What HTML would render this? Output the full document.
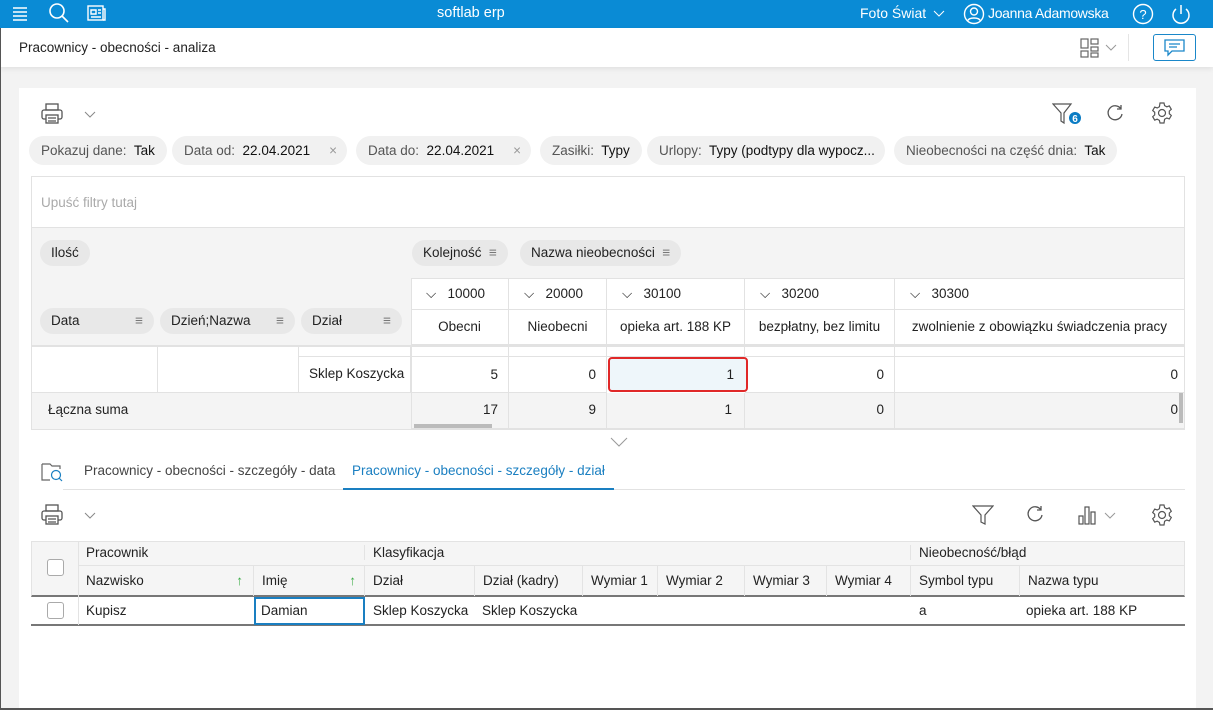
<!DOCTYPE html><html><head><meta charset="utf-8"><style>
*{box-sizing:border-box;margin:0;padding:0}
body{width:1213px;height:710px;overflow:hidden;background:#f3f3f3;font-family:"Liberation Sans",sans-serif;font-size:13px;color:#222;position:relative}
.a{position:absolute}
.top{left:0;top:0;width:1213px;height:28px;background:#0a8bd5;color:#fff}
.chip{position:absolute;top:136px;height:29px;background:#f1f1f1;border-radius:15px;line-height:29px;padding:0 12px;font-size:13.5px;color:#555;white-space:nowrap}
.chip b{color:#111;font-weight:normal}
.fchip{position:absolute;height:26px;background:#e8e8e8;border-radius:13px;line-height:26px;padding:0 11px;font-size:13.5px;color:#222}
.c{position:absolute;border-right:1px solid #e2e2e2;border-bottom:1px solid #e2e2e2;font-size:13.5px;white-space:nowrap;overflow:hidden}
.g{position:absolute;font-size:13.5px;white-space:nowrap;border-right:1px solid #e3e3e3;padding-left:8px}
</style></head><body>
<div class="a top">
 <svg class="a" style="left:12px;top:5px" width="16" height="16"><path d="M1 3h14M1 7h14M1 11h14M1 15h14" stroke="#fff" stroke-width="1.6"/></svg>
 <svg class="a" style="left:48px;top:2px" width="22" height="22" fill="none" stroke="#fff" stroke-width="1.6"><circle cx="9" cy="9" r="7"/><path d="M14 14l6 6"/></svg>
 <svg class="a" style="left:87px;top:5px" width="20" height="16" fill="none" stroke="#fff" stroke-width="1.4"><rect x="1" y="1" width="15" height="14"/><path d="M16 4h2v11h-2M4 5h5v4H4zM11 5h3M11 8h3M4 12h10"/></svg>
 <div class="a" style="left:437px;top:5px;font-size:14.5px">softlab erp</div>
 <div class="a" style="left:860px;top:5px;font-size:14px">Foto Świat</div>
 <svg class="a" style="left:933px;top:10px" width="12" height="8" fill="none" stroke="#fff"><path d="M1 1l5 5 5-5"/></svg>
 <svg class="a" style="left:963px;top:3px" width="22" height="22" fill="none" stroke="#fff" stroke-width="1.4"><circle cx="11" cy="11" r="9.5"/><circle cx="11" cy="8.5" r="3.5"/><path d="M4.5 18c1.5-4 11.5-4 13 0"/></svg>
 <div class="a" style="left:988px;top:5px;font-size:14px;letter-spacing:-0.3px">Joanna Adamowska</div>
 <svg class="a" style="left:1132px;top:3px" width="22" height="22" fill="none" stroke="#fff" stroke-width="1.4"><circle cx="11" cy="11" r="9.5"/><text x="11" y="16" fill="#fff" stroke="none" font-size="13" text-anchor="middle" font-family="Liberation Sans">?</text></svg>
 <svg class="a" style="left:1170px;top:3px" width="22" height="22" fill="none" stroke="#fff" stroke-width="1.5"><path d="M6 6a8 8 0 1 0 10 0M11 2v9"/></svg>
</div>
<div class="a" style="left:0;top:28px;width:1213px;height:39px;background:#fff;box-shadow:0 2px 5px rgba(0,0,0,.08)">
 <div class="a" style="left:19px;top:12px;font-size:13.5px">Pracownicy - obecności - analiza</div>
 <svg class="a" style="left:1080px;top:10px" width="20" height="20" fill="none" stroke="#666" stroke-width="1.2"><rect x="1" y="1" width="7" height="9"/><rect x="11" y="1" width="7" height="5"/><rect x="1" y="13" width="7" height="6"/><rect x="11" y="9" width="7" height="4"/><rect x="11" y="15" width="7" height="4"/></svg>
 <svg class="a" style="left:1105px;top:16px" width="12" height="7" fill="none" stroke="#999"><path d="M1 1l5 5 5-5"/></svg>
 <div class="a" style="left:1128px;top:6px;width:1px;height:27px;background:#e5e5e5"></div>
 <div class="a" style="left:1153px;top:6px;width:43px;height:27px;border:1px solid #1a87c9;border-radius:3px"></div>
 <svg class="a" style="left:1164px;top:11px" width="22" height="18" fill="none" stroke="#1a87c9" stroke-width="1.3"><path d="M1 1h19v11H8l-4 4v-4H1z"/><path d="M5 5h11M5 8h8"/></svg>
</div>
<div class="a" style="left:0;top:28px;width:1px;height:682px;background:#555"></div>
<div class="a" style="left:19px;top:88px;width:1177px;height:622px;background:#fff"></div>
<svg class="a" style="left:40px;top:102px" width="24" height="24" fill="none" stroke="#555" stroke-width="1.3"><rect x="6" y="2" width="12" height="6"/><rect x="2" y="8" width="20" height="9" rx="2"/><rect x="6" y="13" width="12" height="8" fill="#fff"/><path d="M8 16h8M8 19h8"/></svg>
<svg class="a" style="left:84px;top:111px" width="12" height="7" fill="none" stroke="#888"><path d="M1 1l5 5 5-5"/></svg>
<svg class="a" style="left:1052px;top:102px" width="30" height="24" fill="none" stroke="#555" stroke-width="1.2"><path d="M1 2h18l-7 9v10l-3-2v-8z"/><circle cx="23" cy="16" r="6" fill="#0a7cc4" stroke="none"/><text x="23" y="20" fill="#fff" stroke="none" font-size="10" font-weight="bold" text-anchor="middle" font-family="Liberation Sans">6</text></svg>
<svg class="a" style="left:1106px;top:104px" width="18" height="18" fill="none" stroke="#555" stroke-width="1.3"><path d="M15 5A7 7 0 1 0 16 10M15 1v4h-4"/></svg>
<svg class="a" style="left:1150px;top:101px" width="24" height="24" fill="none" stroke="#555" stroke-width="1.2"><circle cx="12" cy="12" r="3.5"/><path d="M10 2h4l.6 2.6 2.2 1.2 2.5-.9 2 3.4-2 1.8v2.6l2 1.8-2 3.4-2.5-.9-2.2 1.2L14 22h-4l-.6-2.6-2.2-1.2-2.5.9-2-3.4 2-1.8v-2.6l-2-1.8 2-3.4 2.5.9 2.2-1.2z"/></svg>
<div class="chip" style="left:29px">Pokazuj dane:&nbsp; <b>Tak</b></div>
<div class="chip" style="left:172px;width:175px">Data od:&nbsp; <b>22.04.2021</b><span class="a" style="right:10px;color:#999">×</span></div>
<div class="chip" style="left:356px;width:175px">Data do:&nbsp; <b>22.04.2021</b><span class="a" style="right:10px;color:#999">×</span></div>
<div class="chip" style="left:540px">Zasiłki:&nbsp; <b>Typy</b></div>
<div class="chip" style="left:647px;width:238px">Urlopy:&nbsp; <b>Typy (podtypy dla wypocz...</b></div>
<div class="chip" style="left:894px">Nieobecności na część dnia:&nbsp; <b>Tak</b></div>
<div class="a" style="left:31px;top:176px;width:1154px;height:254px;border:1px solid #e2e2e2;background:#f4f4f4"></div>
<div class="a" style="left:32px;top:177px;width:1152px;height:51px;background:#fff;border-bottom:1px solid #e2e2e2"></div>
<div class="a" style="left:41px;top:195px;color:#aaa;font-size:13.5px">Upuść filtry tutaj</div>
<div class="fchip" style="left:40px;top:240px">Ilość</div>
<div class="fchip" style="left:412px;top:240px">Kolejność &nbsp;<span style="color:#777">≡</span></div>
<div class="fchip" style="left:520px;top:240px">Nazwa nieobecności &nbsp;<span style="color:#777">≡</span></div>
<div class="fchip" style="left:40px;top:308px;width:114px">Data<span class="a" style="right:11px;color:#777">≡</span></div>
<div class="fchip" style="left:160px;top:308px;width:135px">Dzień;Nazwa<span class="a" style="right:11px;color:#777">≡</span></div>
<div class="fchip" style="left:301px;top:308px;width:101px">Dział<span class="a" style="right:11px;color:#777">≡</span></div>
<div class="a" style="left:411px;top:278px;width:774px;height:67px;background:#fff;border-top:1px solid #e2e2e2;border-left:1px solid #e2e2e2"></div>
<div class="c" style="left:411px;top:278px;width:98px;height:32px;line-height:31px;padding-left:15px">⌵ &nbsp;&nbsp;10000</div>
<div class="c" style="left:509px;top:278px;width:98px;height:32px;line-height:31px;padding-left:15px">⌵ &nbsp;&nbsp;20000</div>
<div class="c" style="left:607px;top:278px;width:138px;height:32px;line-height:31px;padding-left:15px">⌵ &nbsp;&nbsp;30100</div>
<div class="c" style="left:745px;top:278px;width:150px;height:32px;line-height:31px;padding-left:15px">⌵ &nbsp;&nbsp;30200</div>
<div class="c" style="left:895px;top:278px;width:290px;height:32px;line-height:31px;padding-left:15px">⌵ &nbsp;&nbsp;30300</div>
<div class="c" style="left:411px;top:310px;width:98px;height:35px;line-height:34px;text-align:center">Obecni</div>
<div class="c" style="left:509px;top:310px;width:98px;height:35px;line-height:34px;text-align:center">Nieobecni</div>
<div class="c" style="left:607px;top:310px;width:138px;height:35px;line-height:34px;text-align:center">opieka art. 188 KP</div>
<div class="c" style="left:745px;top:310px;width:150px;height:35px;line-height:34px;text-align:center">bezpłatny, bez limitu</div>
<div class="c" style="left:895px;top:310px;width:290px;height:35px;line-height:34px;text-align:center">zwolnienie z obowiązku świadczenia pracy</div>
<div class="a" style="left:32px;top:345px;width:1153px;height:48px;background:#fff;border-top:2px solid #e2e2e2"></div>
<div class="c" style="left:32px;top:347px;width:126px;height:46px"></div>
<div class="c" style="left:158px;top:347px;width:141px;height:46px"></div>
<div class="c" style="left:299px;top:347px;width:112px;height:10px"></div>
<div class="c" style="left:299px;top:357px;width:112px;height:36px;line-height:34px;padding-left:10px">Sklep Koszycka</div>
<div class="c" style="left:411px;top:347px;width:98px;height:10px;border-left:1px solid #e2e2e2"></div>
<div class="c" style="left:509px;top:347px;width:98px;height:10px"></div>
<div class="c" style="left:607px;top:347px;width:138px;height:10px"></div>
<div class="c" style="left:745px;top:347px;width:150px;height:10px"></div>
<div class="c" style="left:895px;top:347px;width:290px;height:10px"></div>
<div class="c" style="left:411px;top:357px;width:98px;height:36px;line-height:36px;text-align:right;padding-right:10px;border-left:1px solid #e2e2e2">5</div>
<div class="c" style="left:509px;top:357px;width:98px;height:36px;line-height:36px;text-align:right;padding-right:10px">0</div>
<div class="c" style="left:745px;top:357px;width:150px;height:36px;line-height:36px;text-align:right;padding-right:10px">0</div>
<div class="c" style="left:895px;top:357px;width:290px;height:36px;line-height:36px;text-align:right;padding-right:6px">0</div>
<div class="a" style="left:608px;top:357px;width:140px;height:35px;background:#eef6fa;border:2px solid #e02828;border-radius:4px;line-height:31px;text-align:right;padding-right:12px;font-size:13.5px">1</div>
<div class="a" style="left:32px;top:393px;width:1153px;height:36px;background:#f4f4f4"></div>
<div class="a" style="left:48px;top:402px;font-size:13.5px">Łączna suma</div>
<div class="c" style="left:411px;top:393px;width:98px;height:36px;line-height:34px;text-align:right;padding-right:10px;border-left:1px solid #e2e2e2">17</div>
<div class="c" style="left:509px;top:393px;width:98px;height:36px;line-height:34px;text-align:right;padding-right:10px">9</div>
<div class="c" style="left:607px;top:393px;width:138px;height:36px;line-height:34px;text-align:right;padding-right:12px">1</div>
<div class="c" style="left:745px;top:393px;width:150px;height:36px;line-height:34px;text-align:right;padding-right:10px">0</div>
<div class="c" style="left:895px;top:393px;width:290px;height:36px;line-height:34px;text-align:right;padding-right:6px">0</div>
<div class="a" style="left:414px;top:424px;width:78px;height:4px;background:#bbb"></div>
<div class="a" style="left:1179px;top:393px;width:4px;height:30px;background:#bbb"></div>
<svg class="a" style="left:610px;top:437px" width="18" height="10" fill="none" stroke="#999"><path d="M1 1l8 8 8-8"/></svg>
<svg class="a" style="left:40px;top:460px" width="24" height="24" fill="none" stroke="#666" stroke-width="1.2"><path d="M2 4h8l2 2h8v3M2 4v16h8"/><circle cx="16" cy="15" r="4.5" stroke="#1a7fc1"/><path d="M19 18l3 3" stroke="#1a7fc1"/></svg>
<div class="a" style="left:63px;top:489px;width:1122px;height:1px;background:#e2e2e2"></div>
<div class="a" style="left:84px;top:463px;font-size:13.5px;color:#444">Pracownicy - obecności - szczegóły - data</div>
<div class="a" style="left:352px;top:463px;font-size:13.5px;color:#1a7fc1">Pracownicy - obecności - szczegóły - dział</div>
<div class="a" style="left:343px;top:488px;width:271px;height:2px;background:#1a7fc1"></div>
<svg class="a" style="left:40px;top:503px" width="24" height="24" fill="none" stroke="#555" stroke-width="1.3"><rect x="6" y="2" width="12" height="6"/><rect x="2" y="8" width="20" height="9" rx="2"/><rect x="6" y="13" width="12" height="8" fill="#fff"/><path d="M8 16h8M8 19h8"/></svg>
<svg class="a" style="left:84px;top:512px" width="12" height="7" fill="none" stroke="#888"><path d="M1 1l5 5 5-5"/></svg>
<svg class="a" style="left:972px;top:504px" width="22" height="22" fill="none" stroke="#555" stroke-width="1.2"><path d="M1 2h20l-8 9v9l-4-2v-7z"/></svg>
<svg class="a" style="left:1026px;top:505px" width="18" height="18" fill="none" stroke="#555" stroke-width="1.3"><path d="M15 5A7 7 0 1 0 16 10M15 1v4h-4"/></svg>
<svg class="a" style="left:1078px;top:504px" width="22" height="22" fill="none" stroke="#555" stroke-width="1.2"><rect x="1" y="12" width="4" height="8"/><rect x="7" y="3" width="4" height="17"/><rect x="13" y="8" width="4" height="12"/></svg>
<svg class="a" style="left:1104px;top:512px" width="12" height="7" fill="none" stroke="#999"><path d="M1 1l5 5 5-5"/></svg>
<svg class="a" style="left:1150px;top:503px" width="24" height="24" fill="none" stroke="#555" stroke-width="1.2"><circle cx="12" cy="12" r="3.5"/><path d="M10 2h4l.6 2.6 2.2 1.2 2.5-.9 2 3.4-2 1.8v2.6l2 1.8-2 3.4-2.5-.9-2.2 1.2L14 22h-4l-.6-2.6-2.2-1.2-2.5.9-2-3.4 2-1.8v-2.6l-2-1.8 2-3.4 2.5.9 2.2-1.2z"/></svg>
<div class="a" style="left:31px;top:541px;width:1154px;height:56px;background:#f5f5f5;border:1px solid #e3e3e3;border-bottom:2px solid #777"></div>
<div class="a" style="left:78px;top:565px;width:1107px;height:1px;background:#e3e3e3"></div>
<div class="a" style="left:31px;top:624px;width:1154px;height:2px;background:#777"></div>
<div class="a" style="left:47px;top:559px;width:17px;height:17px;border:1px solid #aaa;border-radius:3px;background:#fff"></div>
<div class="a" style="left:47px;top:602px;width:17px;height:17px;border:1px solid #aaa;border-radius:3px;background:#fff"></div>
<div class="a" style="left:78px;top:541px;width:1px;height:84px;background:#e3e3e3"></div>
<div class="g" style="left:78px;top:545px;width:287px">Pracownik</div>
<div class="g" style="left:365px;top:545px;width:546px">Klasyfikacja</div>
<div class="g" style="left:911px;top:545px;width:274px;border:0">Nieobecność/błąd</div>
<div class="g" style="left:78px;top:566px;height:30px;line-height:30px;width:176px">Nazwisko<span class="a" style="right:10px;color:#3fae4a">↑</span></div>
<div class="g" style="left:254px;top:566px;height:30px;line-height:30px;width:111px">Imię<span class="a" style="right:8px;color:#3fae4a">↑</span></div>
<div class="g" style="left:365px;top:566px;height:30px;line-height:30px;width:110px">Dział</div>
<div class="g" style="left:475px;top:566px;height:30px;line-height:30px;width:108px">Dział (kadry)</div>
<div class="g" style="left:583px;top:566px;height:30px;line-height:30px;width:75px">Wymiar 1</div>
<div class="g" style="left:658px;top:566px;height:30px;line-height:30px;width:87px">Wymiar 2</div>
<div class="g" style="left:745px;top:566px;height:30px;line-height:30px;width:82px">Wymiar 3</div>
<div class="g" style="left:827px;top:566px;height:30px;line-height:30px;width:84px">Wymiar 4</div>
<div class="g" style="left:911px;top:566px;height:30px;line-height:30px;width:109px">Symbol typu</div>
<div class="g" style="left:1020px;top:566px;height:30px;line-height:30px;width:165px;border:0">Nazwa typu</div>
<div class="g" style="left:78px;top:598px;height:26px;line-height:26px;width:176px;border-right:0">Kupisz</div>
<div class="a" style="left:254px;top:597px;width:111px;height:28px;border:2px solid #1a7fc1;line-height:24px;padding-left:5px;font-size:13.5px">Damian</div>
<div class="g" style="left:365px;top:598px;height:26px;line-height:26px;width:110px;border:0">Sklep Koszycka</div>
<div class="g" style="left:474px;top:598px;height:26px;line-height:26px;width:110px;border:0">Sklep Koszycka</div>
<div class="g" style="left:911px;top:598px;height:26px;line-height:26px;width:109px;border:0">a</div>
<div class="g" style="left:1018px;top:598px;height:26px;line-height:26px;width:165px;border:0">opieka art. 188 KP</div>
<div class="a" style="left:0;top:708px;width:1213px;height:2px;background:#555"></div>
</body></html>
